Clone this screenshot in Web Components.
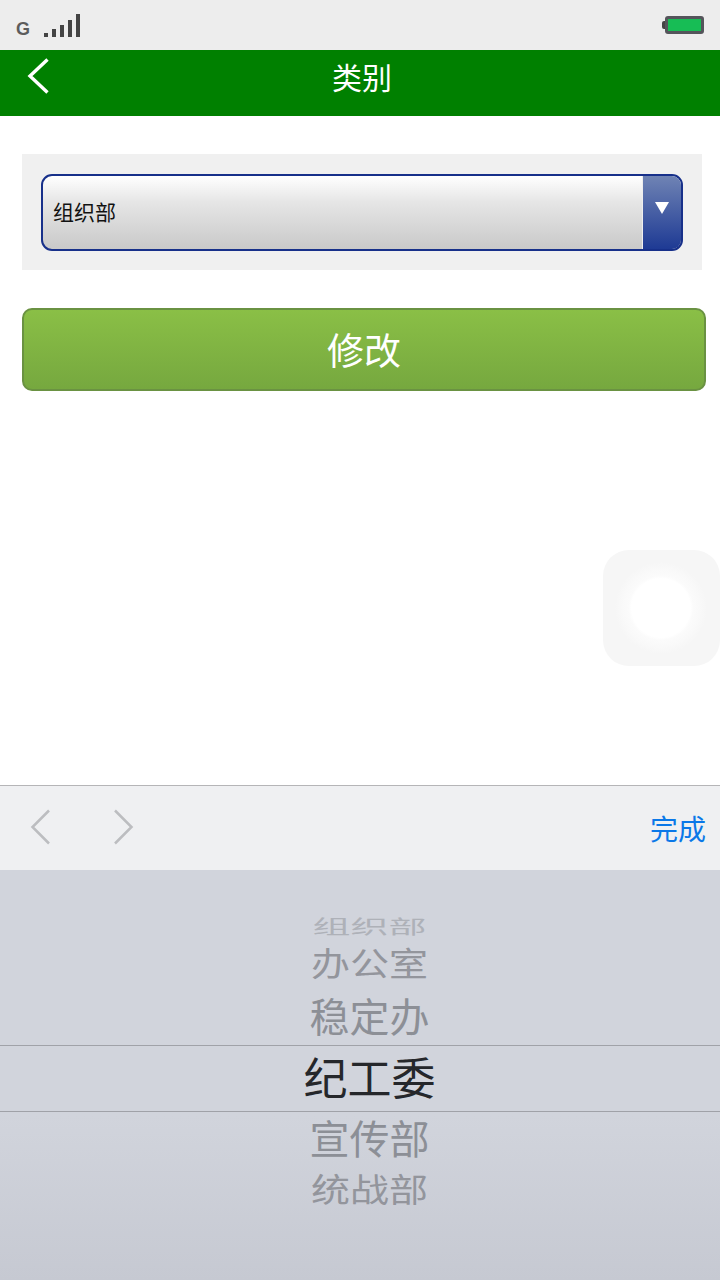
<!DOCTYPE html>
<html lang="zh-CN"><head><meta charset="utf-8">
<style>
html,body{margin:0;padding:0;background:#fff}
body{width:720px;height:1280px;overflow:hidden;font-family:"Noto Sans CJK SC","Liberation Sans",sans-serif;position:relative}
</style></head><body>
<app-screen>
  <status-bar></status-bar>
  <nav-bar>类别</nav-bar>
  <form-area>
    <select-box>组织部</select-box>
    <green-button>修改</green-button>
  </form-area>
  <picker-toolbar>完成</picker-toolbar>
  <picker-wheel>
    <wheel-item h="26" size="38" sy="0.5" color="#aeb1b8" style="margin-top:45px">组织部</wheel-item>
    <wheel-item h="48" size="39" sy="0.84" color="#93959c">办公室</wheel-item>
    <wheel-item h="56" size="40" sy="0.98" color="#8c8f96">稳定办</wheel-item>
    <wheel-item h="67" size="44" sy="1" color="#25272b" selected>纪工委</wheel-item>
    <wheel-item h="54" size="40" sy="0.98" color="#8c8f96">宣传部</wheel-item>
    <wheel-item h="50" size="39" sy="0.84" color="#93959c">统战部</wheel-item>
  </picker-wheel>
  <assistive-touch></assistive-touch>
</app-screen>
<script>
function def(name, css, html, extra){
  customElements.define(name, class extends HTMLElement{
    constructor(){super();const r=this.attachShadow({mode:"open"});r.innerHTML="<style>"+css+"</style>"+html;}
    connectedCallback(){ if(extra) extra.call(this); }
  });
}
def("app-screen",":host{display:flex;flex-direction:column;width:720px;height:1280px;position:relative}","<slot></slot>");
def("status-bar",`:host{display:flex;flex:none;height:50px;align-items:flex-start;justify-content:space-between;background:#ededed;padding:14px 16px 0 16px;box-sizing:border-box}
.l{display:flex;align-items:flex-end;gap:13px}
.g{font:bold 18px/17px "Liberation Sans",sans-serif;color:#5c5c5c;width:15px;margin-bottom:-1px}
.b{display:flex;align-items:flex-end;gap:4px}
.b i{display:block;width:4px;background:#444}
.batt{width:33px;height:12px;border:3px solid #55555b;border-radius:3px;background:#17bd55;margin-top:2px;position:relative}
.batt:before{content:"";position:absolute;left:-6px;top:2px;width:3px;height:8px;background:#444;border-radius:2px 0 0 2px}`,
`<div class="l"><span class="g">G</span><span class="b"><i style="height:4px"></i><i style="height:8px"></i><i style="height:12px"></i><i style="height:17px"></i><i style="height:23px"></i></span></div><div class="batt"></div>`);
def("nav-bar",`:host{display:flex;flex:none;height:66px;box-sizing:border-box;background:#008000;color:#fff;align-items:center;justify-content:center;position:relative;font-size:30px;padding:0 0 14px 4px}
svg{position:absolute;left:26px;top:7px}`,
`<svg width="26" height="38" viewBox="0 0 26 38"><path d="M21.500 2.500 L4 19 L21.500 35.500" fill="none" stroke="#fff" stroke-width="3.400"/></svg><slot></slot>`);
def("form-area",`:host{display:flex;flex:1;flex-direction:column;align-items:flex-start;padding:38px 14px 0 22px;gap:38px}`,"<slot></slot>");
def("select-box",`:host{display:block;width:680px;height:116px;background:#f0f0f0;padding:20px 19px 19px;box-sizing:border-box}
.s{display:flex;height:77px;box-sizing:border-box;border:2px solid #17308a;border-radius:11px;overflow:hidden;background:linear-gradient(#fff,#e6e6e6 35%,#c9c9c9)}
.t{flex:1;display:flex;align-items:center;padding:0 0 4px 10px;font-size:21px;color:#111}
.a{width:39px;background:linear-gradient(#6f83b4,#1e3a94);border-left:1px solid #eee;display:flex;justify-content:center;padding-top:26px;box-sizing:border-box}
.a svg{display:block}`,
`<div class="s"><div class="t"><slot></slot></div><div class="a"><svg width="14" height="12" viewBox="0 0 14 12"><path d="M0 0H14L7 12Z" fill="#fff"/></svg></div></div>`);
def("green-button",`:host{display:flex;width:684px;height:83px;box-sizing:border-box;align-items:center;justify-content:center;border:2px solid #6a9242;border-radius:10px;background:linear-gradient(#8abf46,#76a83f);color:#fff;font-size:37px;padding-bottom:2px}`,"<slot></slot>");
def("picker-toolbar",`:host{display:flex;flex:none;height:85px;box-sizing:border-box;border-top:1px solid #b5b5b7;background:#eff0f2;align-items:center;justify-content:space-between;padding:0 14px 0 30px;color:#0a78e8;font-size:28px}
.n{display:flex;gap:60px}
svg{margin-top:-2px}`,
`<div class="n"><svg width="22" height="36" viewBox="0 0 22 36"><path d="M19 1.500 L2.500 18 L19 34.500" fill="none" stroke="#bcbdc0" stroke-width="2.500"/></svg><svg width="22" height="36" viewBox="0 0 22 36"><path d="M3 1.500 L19.500 18 L3 34.500" fill="none" stroke="#bcbdc0" stroke-width="2.500"/></svg></div><span><slot></slot></span>`);
def("picker-wheel",`:host{display:flex;flex:none;height:410px;flex-direction:column;background:linear-gradient(#d1d4dc 0,#d1d4dc 60%,#c6c9d2 100%)}`,"<slot></slot>");
def("wheel-item",`:host{display:flex;flex:none;align-items:center;justify-content:center;box-sizing:border-box;padding:0 0 5px 19px}
:host([selected]){border-top:1px solid #a0a2a8;border-bottom:1px solid #a0a2a8}
span{display:block;line-height:1;white-space:nowrap;font-weight:400}`,
`<span><slot></slot></span>`,function(){
  this.style.height=this.getAttribute("h")+"px";
  const s=this.shadowRoot.querySelector("span");
  s.style.fontSize=this.getAttribute("size")+"px";
  s.style.color=this.getAttribute("color");
  s.style.transform="scaleY("+this.getAttribute("sy")+")";
});
def("assistive-touch",`:host{display:block;position:absolute;left:603px;top:550px;width:117px;height:116px;border-radius:26px;background:#f6f6f6}
.c{position:absolute;left:12px;top:12px;width:92px;height:92px;border-radius:50%;background:radial-gradient(circle closest-side,#fff 0,#fff 64%,#fbfbfb 70%,#f9f9f9 84%,#f6f6f6 100%)}`,`<div class="c"></div>`);
</script>
</body></html>
